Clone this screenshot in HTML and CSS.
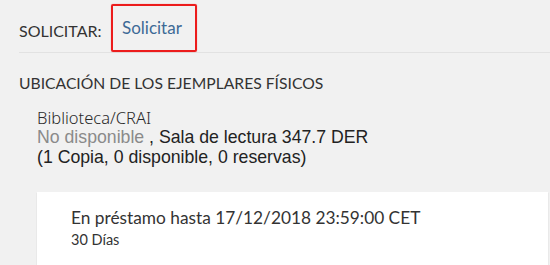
FILE: index.html
```html
<!DOCTYPE html>
<html lang="es">
<head>
<meta charset="utf-8">
<title>Solicitar</title>
<link rel="stylesheet" href="styles.css">
</head>
<body>
<div class="page">
  <div class="request-row">
    <span class="label">SOLICITAR:</span>
    <a class="request-link" href="#">Solicitar</a>
  </div>
  <div class="section">
    <h2 class="section-title">UBICACIÓN DE LOS EJEMPLARES FÍSICOS</h2>
    <div class="location">
      <div class="library">Biblioteca/CRAI</div>
      <div class="status"><span class="unavailable">No disponible</span> , Sala de lectura 347.7 DER</div>
      <div class="copies">(1 Copia, 0 disponible, 0 reservas)</div>
    </div>
    <div class="card">
      <div class="loan">En préstamo hasta 17/12/2018 23:59:00 CET</div>
      <div class="policy">30 Días</div>
    </div>
  </div>
</div>
</body>
</html>
```
FILE: styles.css
```css
html, body {
  margin: 0;
  padding: 0;
  background: #f1f1f1;
}
.page {
  padding-left: 19px;
  font-family: Lato, "Noto Sans", sans-serif;
  color: #333;
}
.request-row {
  display: flex;
  align-items: flex-start;
  height: 53px;
  border-bottom: 1px solid #e2e2e2;
  box-sizing: border-box;
}
.label {
  font-size: 16px;
  line-height: 20px;
  padding-top: 21px;
  color: #333;
  width: 92px;
}
.request-link {
  display: flex;
  align-items: center;
  box-sizing: border-box;
  margin-top: 4px;
  height: 48px;
  width: 86px;
  padding-left: 9px;
  border: 2px solid #ec1c1c;
  border-radius: 2px;
  box-shadow: 0 0 1px rgba(236, 28, 28, 0.6);
  color: #3d6a96;
  font-size: 17px;
  line-height: 20px;
  text-decoration: none;
}
.section-title {
  margin: 0;
  padding-top: 20px;
  font-weight: normal;
  font-size: 15.7px;
  line-height: 20px;
  color: #333;
}
.location {
  padding-left: 18px;
  padding-top: 16px;
}
.library {
  color: #2a2a2a;
  font-family: "Noto Sans", sans-serif;
  font-weight: 300;
  font-size: 16.5px;
  line-height: 18px;
}
.status, .copies {
  font-family: "Liberation Sans", Arial, sans-serif;
  font-size: 17.7px;
  line-height: 20px;
  color: #222;
}
.unavailable {
  color: #8a8a8a;
}
.card {
  margin-top: 25px;
  margin-left: 18px;
  margin-right: 2px;
  height: 73px;
  background: #fff;
  box-shadow: 0 1px 1px rgba(0, 0, 0, 0.2);
  padding-left: 34px;
  padding-top: 14px;
  box-sizing: border-box;
}
.loan {
  font-size: 17.3px;
  line-height: 24px;
  color: #333;
}
.policy {
  font-size: 14.5px;
  line-height: 20px;
  color: #333;
}
```
